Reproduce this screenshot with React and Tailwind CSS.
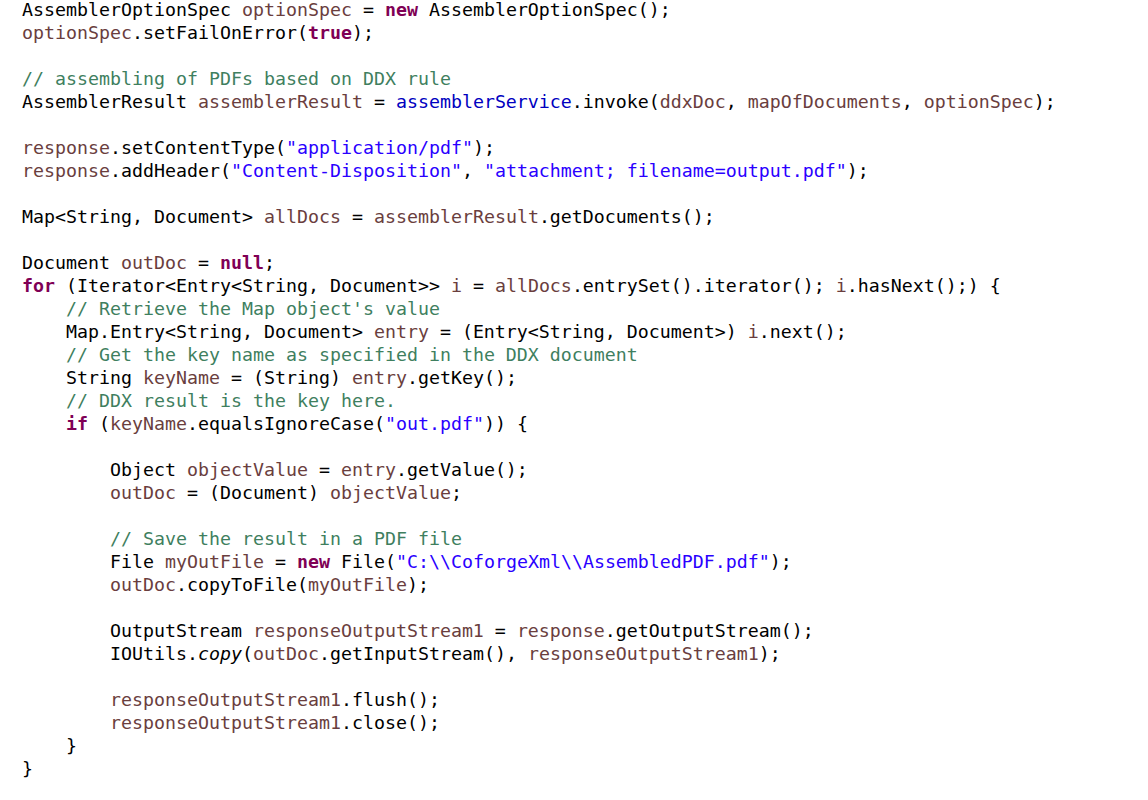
const K = 'text-[#7f0055] font-bold';
const V = 'text-[#6a3e3e]';
const S = 'text-[#2a00ff]';
const C = 'text-[#3f7f5f]';
const F = 'text-[#0000c0]';
const I = 'italic';

// each line: list of [text, className]
const lines = [
  [['AssemblerOptionSpec '], ['optionSpec', V], [' = '], ['new', K], [' AssemblerOptionSpec();']],
  [['optionSpec', V], ['.setFailOnError('], ['true', K], [');']],
  [],
  [['// assembling of PDFs based on DDX rule', C]],
  [['AssemblerResult '], ['assemblerResult', V], [' = '], ['assemblerService', F], ['.invoke('], ['ddxDoc', V], [', '], ['mapOfDocuments', V], [', '], ['optionSpec', V], [');']],
  [],
  [['response', V], ['.setContentType('], ['"application/pdf"', S], [');']],
  [['response', V], ['.addHeader('], ['"Content-Disposition"', S], [', '], ['"attachment; filename=output.pdf"', S], [');']],
  [],
  [['Map<String, Document> '], ['allDocs', V], [' = '], ['assemblerResult', V], ['.getDocuments();']],
  [],
  [['Document '], ['outDoc', V], [' = '], ['null', K], [';']],
  [['for', K], [' (Iterator<Entry<String, Document>> '], ['i', V], [' = '], ['allDocs', V], ['.entrySet().iterator(); '], ['i', V], ['.hasNext();) {']],
  [['    '], ['// Retrieve the Map object\'s value', C]],
  [['    Map.Entry<String, Document> '], ['entry', V], [' = (Entry<String, Document>) '], ['i', V], ['.next();']],
  [['    '], ['// Get the key name as specified in the DDX document', C]],
  [['    String '], ['keyName', V], [' = (String) '], ['entry', V], ['.getKey();']],
  [['    '], ['// DDX result is the key here.', C]],
  [['    '], ['if', K], [' ('], ['keyName', V], ['.equalsIgnoreCase('], ['"out.pdf"', S], [')) {']],
  [],
  [['        Object '], ['objectValue', V], [' = '], ['entry', V], ['.getValue();']],
  [['        '], ['outDoc', V], [' = (Document) '], ['objectValue', V], [';']],
  [],
  [['        '], ['// Save the result in a PDF file', C]],
  [['        File '], ['myOutFile', V], [' = '], ['new', K], [' File('], ['"C:\\\\CoforgeXml\\\\AssembledPDF.pdf"', S], [');']],
  [['        '], ['outDoc', V], ['.copyToFile('], ['myOutFile', V], [');']],
  [],
  [['        OutputStream '], ['responseOutputStream1', V], [' = '], ['response', V], ['.getOutputStream();']],
  [['        IOUtils.'], ['copy', I], ['('], ['outDoc', V], ['.getInputStream(), '], ['responseOutputStream1', V], [');']],
  [],
  [['        '], ['responseOutputStream1', V], ['.flush();']],
  [['        '], ['responseOutputStream1', V], ['.close();']],
  [['    }']],
  [['}']],
];

export default function App() {
  return (
    <div className="w-[1148px] h-[800px] bg-white overflow-hidden">
      <div className="pl-[22px] -mt-[2px] text-black text-[18.27px] leading-[23px] whitespace-pre font-['DejaVu_Sans_Mono',monospace]">
        {lines.map((tokens, idx) => (
          <div key={idx} className="h-[23px]">
            {tokens.map(([text, cls], j) => (
              <span key={j} className={cls}>{text}</span>
            ))}
          </div>
        ))}
      </div>
    </div>
  );
}
